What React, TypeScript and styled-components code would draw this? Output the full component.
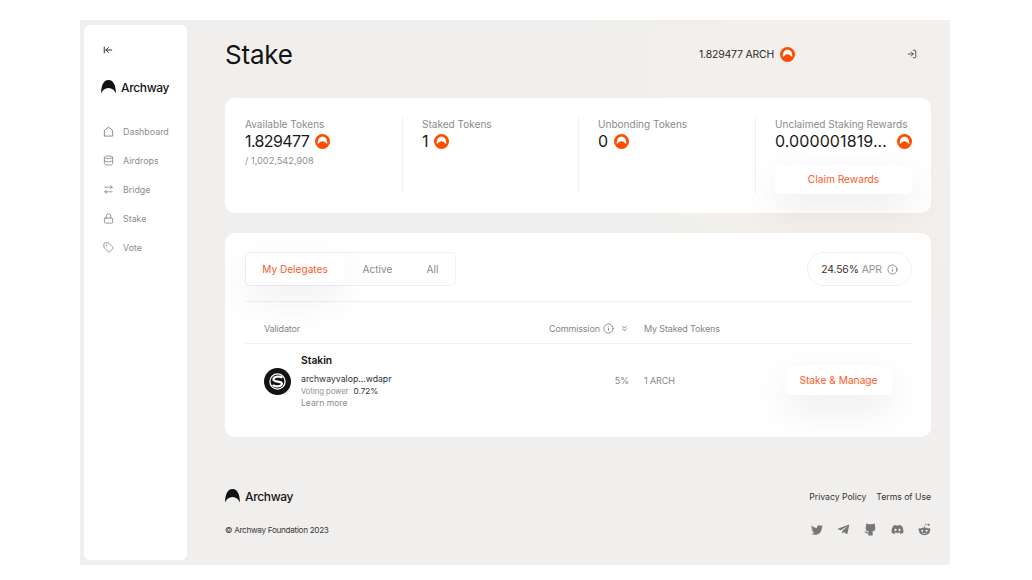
import React from "react";
import styled, { createGlobalStyle } from "styled-components";
import { ArrowLeftToLine, ArrowRightLeft, ChevronsDown, Database, Info, LogIn, Lock, Tag } from "lucide-react";
import { FaTwitter, FaTelegramPlane, FaDiscord, FaRedditAlien } from "react-icons/fa";

const Global = createGlobalStyle`
  html, body { margin: 0; padding: 0; background: #fff; height: 580px; overflow: hidden; }
  body { font-family: Inter, "Liberation Sans", sans-serif; color: #1c1c1c; }
  * { box-sizing: border-box; }
`;

const Frame = styled.div`
  margin: 20px 0 0 80px;
  width: 870px;
  height: 545px;
  background: radial-gradient(circle at 88% 12%, #f3efec 0, #f0efed 40%);
  display: flex;
  padding: 5px 19px 5px 4px;
`;
const Sidebar = styled.aside`
  width: 103px;
  flex: none;
  background: #fff;
  border-radius: 6px;
  padding: 19px 0 0 17px;
  display: flex;
  flex-direction: column;
`;
const Collapse = styled.div`
  height: 12px;
  margin-left: 2px;
  display: flex;
  align-items: center;
  color: #222;
`;
const SideLogo = styled.div`
  margin: 23px 0 0 0;
  display: flex;
  align-items: center;
  gap: 5px;
  height: 16px;
  font-size: 12px;
  font-weight: 500;
  letter-spacing: -0.35px;
  color: #141414;
`;
const Nav = styled.nav`
  margin-top: 30px;
  display: flex;
  flex-direction: column;
  gap: 17px;
`;
const NavItem = styled.div`
  display: flex;
  align-items: center;
  height: 12px;
  gap: 9px;
  margin-left: 2px;
  font-size: 8.9px;
  color: #8d8d8d;
  svg { flex: none; color: #777; }
`;
const Main = styled.main`
  flex: 1;
  margin-left: 38px;
  display: flex;
  flex-direction: column;
  min-width: 0;
`;
const Header = styled.header`
  height: 73px;
  display: flex;
  align-items: center;
  padding-bottom: 15px;
`;
const Title = styled.h1`
  margin: 0;
  font-size: 26px;
  font-weight: 400;
  letter-spacing: -0.2px;
  color: #141414;
  flex: 1;
`;
const Balance = styled.div`
  display: flex;
  align-items: center;
  gap: 6px;
  font-size: 10.4px;
  letter-spacing: -0.15px;
  color: #2b2b2b;
`;
const Exit = styled.div`
  margin-left: 112px;
  margin-right: 14px;
  display: flex;
  color: #333;
`;
const Card = styled.section`
  background: #fff;
  border-radius: 10px;
`;
const Stats = styled(Card)`
  height: 115px;
  padding: 19px 19px 19px 20px;
  display: grid;
  grid-template-columns: 157px 176px 177px 1fr;
`;
const Stat = styled.div<{ $divided?: boolean }>`
  ${(p) => (p.$divided ? "border-left: 1px solid #f1f0ef; padding-left: 19px;" : "")}
  display: flex;
  flex-direction: column;
  min-width: 0;
`;
const StatLabel = styled.div`
  font-size: 10.05px;
  line-height: 14px;
  color: #8b8b8b;
  white-space: nowrap;
`;
const StatValue = styled.div<{ $spread?: boolean }>`
  display: flex;
  align-items: center;
  justify-content: ${(p) => (p.$spread ? "space-between" : "flex-start")};
  gap: 6px;
  font-size: 16px;
  letter-spacing: ${(p) => (p.$spread ? "0.1px" : "-0.6px")};
  line-height: 20px;
  color: #1a1a1a;
  white-space: nowrap;
`;
const StatSub = styled.div`
  margin-top: 4px;
  font-size: 9.2px;
  line-height: 12px;
  color: #8f8f8f;
`;
const ActionButton = styled.button<{ $width: number }>`
  width: ${(p) => p.$width}px;
  height: 29px;
  flex: none;
  border: 0;
  border-radius: 5px;
  padding: 0 0 2px;
  background: #fff;
  color: #ff5a26;
  font: 400 10.2px Inter, "Liberation Sans", sans-serif;
  box-shadow: 0 14px 38px rgba(0, 0, 0, 0.085);
`;
const ClaimButton = styled(ActionButton)`
  margin-top: 14px;
`;
const Delegates = styled(Card)`
  margin-top: 20px;
  height: 204px;
  padding: 19px 19px 0 20px;
`;
const Controls = styled.div`
  height: 50px;
  display: flex;
  justify-content: space-between;
  align-items: flex-start;
  border-bottom: 1px solid #f3f2f1;
`;
const Tabs = styled.div`
  width: 211px;
  height: 34px;
  border: 1px solid #f1f0ef;
  border-radius: 5px;
  display: flex;
  align-items: center;
  font-size: 10.1px;
  color: #8a8a8a;
`;
const TabItem = styled.div<{ $active?: boolean; $w: number }>`
  width: ${(p) => p.$w}px;
  height: 100%;
  display: flex;
  align-items: center;
  justify-content: center;
  border-radius: 5px;
  ${(p) => (p.$active ? "color:#ff5a26; background:#fff; box-shadow:0 14px 38px rgba(0,0,0,.07);" : "")}
`;
const AprPill = styled.div`
  width: 105px;
  height: 34px;
  border: 1px solid #f1f0ef;
  border-radius: 17px;
  display: flex;
  align-items: center;
  justify-content: center;
  gap: 3px;
  font-size: 10.4px;
  letter-spacing: -0.15px;
  color: #333;
  span { color: #8f8f8f; }
  svg { color: #666; margin-left: 2px; }
`;
const TableRow = styled.div`
  display: grid;
  grid-template-columns: 285px 95px 1fr;
  padding-left: 19px;
`;
const TableHead = styled(TableRow)`
  height: 42px;
  align-items: center;
  padding-top: 12px;
  border-bottom: 1px solid #f3f2f1;
  font-size: 9px;
  letter-spacing: -0.15px;
  color: #858585;
`;
const HeadCell = styled.div`
  display: flex;
  align-items: center;
  gap: 3px;
  svg { color: #666; flex: none; }
  svg + svg { margin-left: 3px; }
`;
const TableBody = styled(TableRow)`
  height: 73px;
  align-items: center;
`;
const Validator = styled.div`
  display: flex;
  align-items: center;
  gap: 10px;
`;
const ValidatorAvatar = styled.div`
  display: flex;
  margin-top: 1px;
`;
const ValidatorText = styled.div`
  display: flex;
  flex-direction: column;
  margin-top: 2px;
`;
const ValidatorName = styled.div`
  font-size: 10.3px;
  font-weight: 600;
  line-height: 13px;
  color: #151515;
`;
const Address = styled.div`
  margin-top: 6px;
  font-size: 8.7px;
  line-height: 12px;
  color: #2f2f2f;
`;
const Power = styled.div`
  margin-top: 1px;
  font-size: 7.6px;
  line-height: 11px;
  color: #8c8c8c;
  b { font-weight: 400; color: #333; margin-left: 5px; font-size: 8.2px; }
`;
const Learn = styled.div`
  margin-top: 0;
  font-size: 8.6px;
  line-height: 12px;
  color: #8c8c8c;
`;
const Commission = styled.div`
  text-align: right;
  padding-right: 15px;
  font-size: 9px;
  color: #858585;
`;
const Staked = styled.div`
  display: flex;
  align-items: center;
  justify-content: space-between;
  padding-right: 20px;
  font-size: 9px;
  letter-spacing: -0.1px;
  color: #858585;
`;
const Footer = styled.footer`
  margin-top: 51px;
  display: flex;
  flex-direction: column;
  gap: 19px;
`;
const FooterRow = styled.div`
  display: flex;
  align-items: center;
  justify-content: space-between;
`;
const FootLinks = styled.div`
  display: flex;
  gap: 10px;
  margin-top: 1px;
  font-size: 8.7px;
  letter-spacing: -0.03px;
  color: #333;
`;
const Copy = styled.div`
  font-size: 8.2px;
  letter-spacing: -0.32px;
  color: #3a3a3a;
`;
const Social = styled.div`
  display: flex;
  align-items: center;
  gap: 14px;
  color: #777;
`;
const FootLogo = styled(SideLogo)`
  margin: 0;
`;

const ArchMark = ({ w = 15 }: { w?: number }) => (
  <svg width={w} height={w * 0.9} viewBox="0 0 16 14.4" aria-hidden="true">
    <path d="M8 0C3 0 .3 5 0 14.4 1.6 10.6 4.3 8.4 8 8.4s6.4 2.2 8 6C15.7 5 13 0 8 0Z" fill="#111" />
  </svg>
);
const Coin = ({ s = 15 }: { s?: number }) => (
  <svg width={s} height={s} viewBox="0 0 16 16" style={{ flex: "none" }} aria-hidden="true">
    <circle cx="8" cy="8" r="8" fill="#ff4d00" />
    <path d="M8 3C4.6 3 3 5.8 2.8 10.2h1.4C5 8.4 6.3 7.6 8 7.6s3 .8 3.8 2.6h1.4C13 5.8 11.4 3 8 3Z" fill="#fff" />
  </svg>
);
const Avatar = () => (
  <svg width="27" height="27" viewBox="0 0 27 27" style={{ flex: "none" }} aria-hidden="true">
    <circle cx="13.5" cy="13.5" r="13.5" fill="#131313" />
    <circle cx="13.5" cy="13.5" r="7.6" fill="none" stroke="#fff" strokeWidth="1.3" />
    <path d="M18.5 9.6c-1-.8-3-1.2-5.2-1-2.2.2-3.8 1.2-3.8 2.8 0 3.2 8.4 1.2 8.4 4.2 0 1.6-1.8 2.6-4.2 2.7-2 .1-4-.4-5-1.3" fill="none" stroke="#fff" strokeWidth="2.2" />
  </svg>
);
const HomeIcon = () => (
  <svg width="11" height="11" viewBox="0 0 12 12" fill="none" stroke="currentColor" strokeWidth="0.9" aria-hidden="true">
    <path d="M1.5 11V4.8L6 1l4.5 3.8V11Z" strokeLinejoin="round" />
  </svg>
);
const GithubCat = () => (
  <svg width="13" height="13" viewBox="0 0 24 24" fill="currentColor" stroke="currentColor" strokeWidth="2" strokeLinejoin="round" strokeLinecap="round" aria-hidden="true">
    <path d="M15 22v-4a4.8 4.8 0 0 0-1-3.5c3 0 6-2 6-5.5.08-1.25-.27-2.48-1-3.5.28-1.15.28-2.35 0-3.5 0 0-1 0-3 1.5-2.64-.5-5.36-.5-8 0C6 2 5 2 5 2c-.3 1.15-.3 2.35 0 3.5A5.403 5.403 0 0 0 4 9c0 3.5 3 5.5 6 5.5-.39.49-.68 1.05-.85 1.65-.17.6-.22 1.23-.15 1.85v4Z" />
    <path d="M9 18c-4.51 2-5-2-7-2" fill="none" />
  </svg>
);

const navItems = [
  { label: "Dashboard", icon: <HomeIcon /> },
  { label: "Airdrops", icon: <Database size={11} strokeWidth={1.6} /> },
  { label: "Bridge", icon: <ArrowRightLeft size={11} strokeWidth={1.6} /> },
  { label: "Stake", icon: <Lock size={11} strokeWidth={1.6} /> },
  { label: "Vote", icon: <Tag size={11} strokeWidth={1.6} /> },
];

export default function App() {
  return (
    <>
      <Global />
      <Frame>
        <Sidebar>
          <Collapse><ArrowLeftToLine size={10} strokeWidth={2.2} /></Collapse>
          <SideLogo><ArchMark />Archway</SideLogo>
          <Nav>
            {navItems.map((n) => (
              <NavItem key={n.label}>{n.icon}{n.label}</NavItem>
            ))}
          </Nav>
        </Sidebar>
        <Main>
          <Header>
            <Title>Stake</Title>
            <Balance>1.829477 ARCH <Coin /></Balance>
            <Exit><LogIn size={10} strokeWidth={1.9} /></Exit>
          </Header>
          <Stats>
            <Stat>
              <StatLabel>Available Tokens</StatLabel>
              <StatValue>1.829477 <Coin /></StatValue>
              <StatSub>/ 1,002,542,908</StatSub>
            </Stat>
            <Stat $divided>
              <StatLabel>Staked Tokens</StatLabel>
              <StatValue>1 <Coin /></StatValue>
            </Stat>
            <Stat $divided>
              <StatLabel>Unbonding Tokens</StatLabel>
              <StatValue>0 <Coin /></StatValue>
            </Stat>
            <Stat $divided>
              <StatLabel>Unclaimed Staking Rewards</StatLabel>
              <StatValue $spread>0.000001819... <Coin /></StatValue>
              <ClaimButton $width={137}>Claim Rewards</ClaimButton>
            </Stat>
          </Stats>
          <Delegates>
            <Controls>
              <Tabs>
                <TabItem $active $w={98}>My Delegates</TabItem>
                <TabItem $w={67}>Active</TabItem>
                <TabItem $w={43}>All</TabItem>
              </Tabs>
              <AprPill>24.56% <span>APR</span><Info size={11} strokeWidth={1.5} /></AprPill>
            </Controls>
            <TableHead>
              <HeadCell>Validator</HeadCell>
              <HeadCell>Commission <Info size={11} strokeWidth={1.5} /><ChevronsDown size={9} strokeWidth={2} /></HeadCell>
              <HeadCell>My Staked Tokens</HeadCell>
            </TableHead>
            <TableBody>
              <Validator>
                <ValidatorAvatar><Avatar /></ValidatorAvatar>
                <ValidatorText>
                  <ValidatorName>Stakin</ValidatorName>
                  <Address>archwayvalop...wdapr</Address>
                  <Power>Voting power<b>0.72%</b></Power>
                  <Learn>Learn more</Learn>
                </ValidatorText>
              </Validator>
              <Commission>5%</Commission>
              <Staked>1 ARCH<ActionButton $width={107}>Stake &amp; Manage</ActionButton></Staked>
            </TableBody>
          </Delegates>
          <Footer>
            <FooterRow>
              <FootLogo><ArchMark />Archway</FootLogo>
              <FootLinks><span>Privacy Policy</span><span>Terms of Use</span></FootLinks>
            </FooterRow>
            <FooterRow>
              <Copy>© Archway Foundation 2023</Copy>
              <Social>
                <FaTwitter size={12} />
                <FaTelegramPlane size={13} />
                <GithubCat />
                <FaDiscord size={13} />
                <FaRedditAlien size={13} />
              </Social>
            </FooterRow>
          </Footer>
        </Main>
      </Frame>
    </>
  );
}
